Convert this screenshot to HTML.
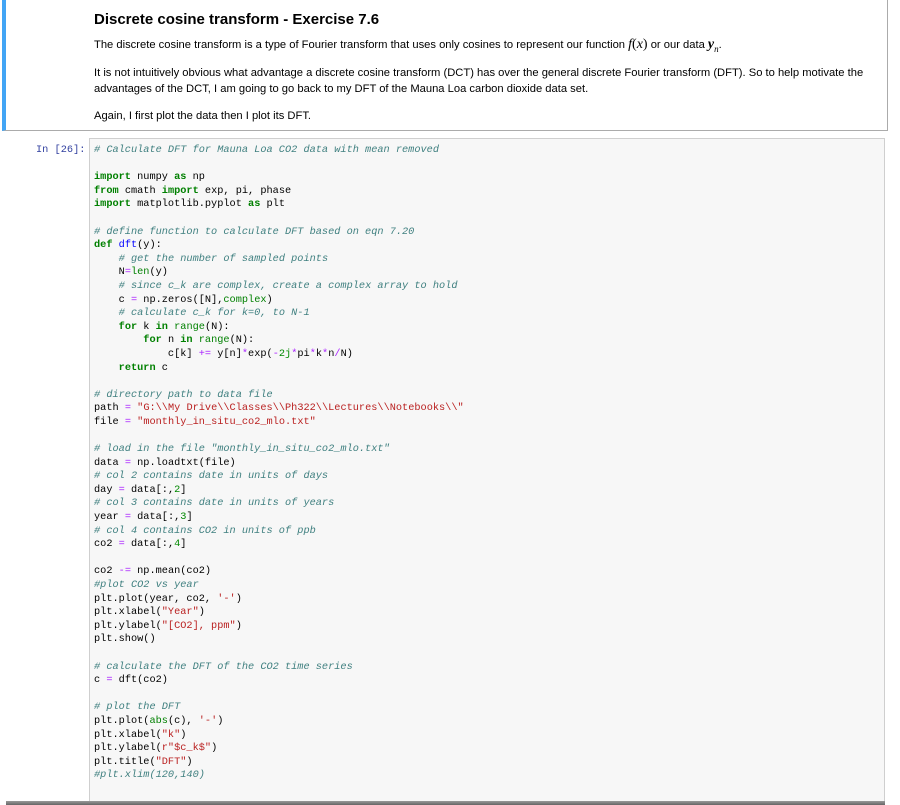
<!DOCTYPE html>
<html><head><meta charset="utf-8"><style>
body{margin:0;width:900px;height:805px;background:#fff;overflow:hidden;position:relative;font-family:"Liberation Sans",Arial,sans-serif;}
.md{position:absolute;left:2px;top:-2px;width:886px;height:133px;border:1px solid #ababab;border-left:4px solid #42a5f5;box-sizing:border-box;background:#fff;}
.md h1{position:absolute;left:88px;top:12px;margin:0;font-size:15px;font-weight:bold;color:#000;}
.md p{position:absolute;left:88px;margin:0;font-size:11.2px;line-height:16px;color:#000;width:790px;}
.mi{font-family:"Liberation Serif",serif;font-style:italic;font-size:14px;}
.prompt{position:absolute;left:36px;top:144px;font-family:"Liberation Mono",monospace;font-size:10.3px;color:#303f9f;line-height:13.6px;}
.code{position:absolute;left:89px;top:138px;width:796px;height:664px;background:#f7f7f7;border:1px solid #cfcfcf;box-sizing:border-box;}
pre{margin:0;position:absolute;left:4px;top:5px;font-family:"Liberation Mono",monospace;font-size:10.27px;line-height:13.6px;color:#000;}
.c{color:#408080;font-style:italic}.k{color:#008000;font-weight:bold}.s{color:#ba2121}.o{color:#aa22ff}.n{color:#080}.f{color:#0000ff}.b{color:#008000}
.bar{position:absolute;left:6px;top:801px;width:879px;height:4px;background:linear-gradient(#999,#666);}
</style></head><body>
<div class="md">
<h1>Discrete cosine transform - Exercise 7.6</h1>
<p style="top:38px">The discrete cosine transform is a type of Fourier transform that uses only cosines to represent our function <span class="mi">f</span><span style="font-family:'Liberation Serif',serif;font-size:14px">(</span><span class="mi">x</span><span style="font-family:'Liberation Serif',serif;font-size:14px">)</span> or our data <span class="mi"><b>y</b><sub style="font-size:9px">n</sub></span>.</p>
<p style="top:66px">It is not intuitively obvious what advantage a discrete cosine transform (DCT) has over the general discrete Fourier transform (DFT). So to help motivate the advantages of the DCT, I am going to go back to my DFT of the Mauna Loa carbon dioxide data set.</p>
<p style="top:109px">Again, I first plot the data then I plot its DFT.</p>
</div>
<div class="prompt">In [26]:</div>
<div class="code"><pre><span class="c"># Calculate DFT for Mauna Loa CO2 data with mean removed</span>

<span class="k">import</span> numpy <span class="k">as</span> np
<span class="k">from</span> cmath <span class="k">import</span> exp, pi, phase
<span class="k">import</span> matplotlib.pyplot <span class="k">as</span> plt

<span class="c"># define function to calculate DFT based on eqn 7.20</span>
<span class="k">def</span> <span class="f">dft</span>(y):
    <span class="c"># get the number of sampled points</span>
    N<span class="o">=</span><span class="b">len</span>(y)
    <span class="c"># since c_k are complex, create a complex array to hold</span>
    c <span class="o">=</span> np.zeros([N],<span class="b">complex</span>)
    <span class="c"># calculate c_k for k=0, to N-1</span>
    <span class="k">for</span> k <span class="k">in</span> <span class="b">range</span>(N):
        <span class="k">for</span> n <span class="k">in</span> <span class="b">range</span>(N):
            c[k] <span class="o">+=</span> y[n]<span class="o">*</span>exp(<span class="o">-</span><span class="n">2j</span><span class="o">*</span>pi<span class="o">*</span>k<span class="o">*</span>n<span class="o">/</span>N)
    <span class="k">return</span> c

<span class="c"># directory path to data file</span>
path <span class="o">=</span> <span class="s">"G:\\My Drive\\Classes\\Ph322\\Lectures\\Notebooks\\"</span>
file <span class="o">=</span> <span class="s">"monthly_in_situ_co2_mlo.txt"</span>

<span class="c"># load in the file "monthly_in_situ_co2_mlo.txt"</span>
data <span class="o">=</span> np.loadtxt(file)
<span class="c"># col 2 contains date in units of days</span>
day <span class="o">=</span> data[:,<span class="n">2</span>]
<span class="c"># col 3 contains date in units of years</span>
year <span class="o">=</span> data[:,<span class="n">3</span>]
<span class="c"># col 4 contains CO2 in units of ppb</span>
co2 <span class="o">=</span> data[:,<span class="n">4</span>]

co2 <span class="o">-=</span> np.mean(co2)
<span class="c">#plot CO2 vs year</span>
plt.plot(year, co2, <span class="s">'-'</span>)
plt.xlabel(<span class="s">"Year"</span>)
plt.ylabel(<span class="s">"[CO2], ppm"</span>)
plt.show()

<span class="c"># calculate the DFT of the CO2 time series</span>
c <span class="o">=</span> dft(co2)

<span class="c"># plot the DFT</span>
plt.plot(<span class="b">abs</span>(c), <span class="s">'-'</span>)
plt.xlabel(<span class="s">"k"</span>)
plt.ylabel(<span class="s">r"$c_k$"</span>)
plt.title(<span class="s">"DFT"</span>)
<span class="c">#plt.xlim(120,140)</span></pre></div>
<div class="bar"></div>
</body></html>
